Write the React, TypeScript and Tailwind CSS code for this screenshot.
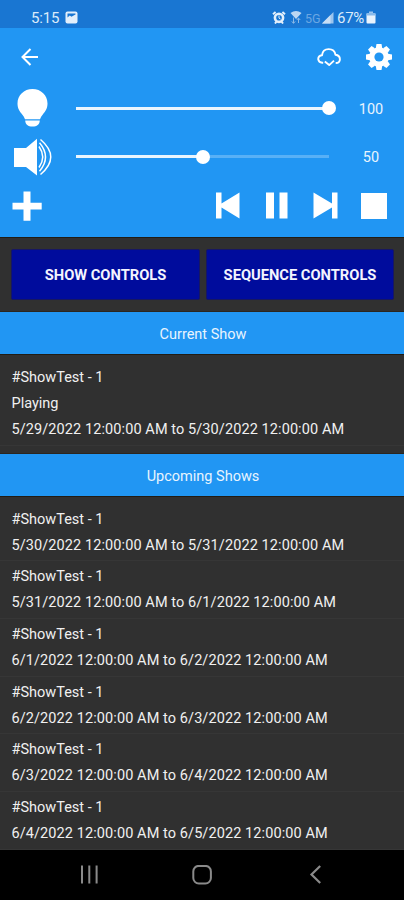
import React from "react";

const upcoming = [
  "5/30/2022 12:00:00 AM to 5/31/2022 12:00:00 AM",
  "5/31/2022 12:00:00 AM to 6/1/2022 12:00:00 AM",
  "6/1/2022 12:00:00 AM to 6/2/2022 12:00:00 AM",
  "6/2/2022 12:00:00 AM to 6/3/2022 12:00:00 AM",
  "6/3/2022 12:00:00 AM to 6/4/2022 12:00:00 AM",
  "6/4/2022 12:00:00 AM to 6/5/2022 12:00:00 AM",
];

const gearAngles = [0, 45, 90, 135, 180, 225, 270, 315];

function StatusBar() {
  return (
    <div className="flex h-7 shrink-0 items-start bg-[#1976d2] pt-[9px] pl-[31px] text-[#dcebfa]">
      <span className="w-[34px] text-[15px] leading-[19px] tracking-[-0.2px]">5:15</span>
      <svg className="mt-[2px]" width="13" height="13" viewBox="0 0 13 13">
        <rect x="0.5" y="0.5" width="12" height="12" rx="2" fill="#e3effb" />
        <path d="M2.500 6.500 4.800 4.500 6.400 5.800 10.500 3.500V2.500h-8Z" fill="#1976d2" />
      </svg>
      <svg className="mt-[2px] ml-[194px]" width="14" height="13" viewBox="0 0 14 13">
        <path d="M1 3.2 3.6 1M13 3.2 10.4 1M3 12.5l1.5-2M11 12.5l-1.5-2" stroke="#e3effb" strokeWidth="2" />
        <circle cx="7" cy="6.8" r="4.1" fill="none" stroke="#e3effb" strokeWidth="2.600" />
        <path d="M7 4.5v2.6l1.6 1" stroke="#e3effb" strokeWidth="1" fill="none" />
      </svg>
      <svg className="mt-[1px] ml-[4px]" width="12" height="14" viewBox="0 0 12 14">
        <path d="M0.5 3Q6-1 11.500 3L6 9Z" fill="#bdd7f2" />
        <path d="M3.500 7.500v5.500M1.8 11.400l1.700 2 1.700-2M8.500 13V7.800M6.800 10l1.700-2 1.700 2" stroke="#8ab8e6" fill="none" />
      </svg>
      <span className="ml-[3px] w-[17px] text-[12.500px] leading-[19px] text-[#6ba7e3]">5G</span>
      <svg className="mt-[3px]" width="12" height="12" viewBox="0 0 12 12">
        <path d="M0 11.5 11.5 0v11.5Z" fill="#9cc5ee" />
        <path d="M0 11.5 8.5 3v8.5Z" fill="#c7def5" />
      </svg>
      <span className="ml-[3px] w-[29px] text-[15px] leading-[19px] tracking-[-0.3px]">67%</span>
      <svg className="mt-[2px]" width="10" height="13" viewBox="0 0 10 13">
        <path d="M3 0.5h4v2H3Z" fill="#9cc5ee" />
        <rect x="0.5" y="2" width="9" height="10.5" rx="1" fill="#e9f3fd" />
        <path d="M1 2h8v2.500H1Z" fill="#89baeb" />
      </svg>
    </div>
  );
}

function Slider({ value }: { value: number }) {
  return (
    <div className="flex w-[253px] items-center">
      <div className="h-[3px] bg-[#eaf5fe]" style={{ width: `${value}%` }} />
      <div className="z-10 -mx-[7px] size-[14px] shrink-0 rounded-full bg-white" />
      <div className="h-[3px] flex-1 bg-[#58b0f6]" />
    </div>
  );
}

function Header() {
  return (
    <div className="flex h-[209px] shrink-0 flex-col bg-[#2196f3] text-white">
      <div className="flex h-[56px] items-center pt-[2px] pl-[20px]">
        <svg width="19" height="18" viewBox="0 0 19 18" fill="none" stroke="#fff" strokeWidth="2">
          <path d="M18 9H3M10.500 1 2.500 9l8 8" />
        </svg>
        <svg className="ml-[277px]" width="26" height="20" viewBox="0 0 26 20" fill="none" stroke="#fff" strokeWidth="1.900" strokeLinejoin="round">
          <path d="M7.200 15.800H6.200A4.200 4.200 0 0 1 2.200 12.200C2.200 9.900 3.800 8.600 6 8.300 6.400 4.500 9 2.100 12.700 2.100c3.600 0 6.200 2.200 6.800 5.700 2.700.4 4.400 2.100 4.400 4.400 0 2.300-1.700 3.800-4.200 3.800" />
          <path d="m8.800 14.600 4.400 3.500 4.800-4.500" />
        </svg>
        <svg className="ml-[24px]" width="26" height="26" viewBox="-13 -13 26 26">
          <g fill="#fff">
            <circle r="9.800" />
            {gearAngles.map((angle) => (
              <path key={angle} transform={`rotate(${angle})`} d="M-3.200-9-2.500-13H2.500L3.200-9Z" />
            ))}
          </g>
          <circle r="4.600" fill="#2196f3" />
        </svg>
      </div>
      <div className="flex h-[48px] items-center pl-[17px]">
        <svg width="31" height="38" viewBox="0 0 31 38" fill="#fff">
          <path d="M15.5 0C7 0 .5 6.3.5 14.6c0 5 2.2 8 4.7 11 1.3 1.6 2.200 3.100 2.800 4.600h15c.6-1.500 1.500-3 2.800-4.600 2.500-3 4.700-6 4.700-11C30.500 6.300 24 0 15.500 0Z" />
          <path d="M8.200 31.400h14.600c-.3 4-2.800 6.200-7.300 6.200s-7-2.200-7.300-6.200Z" />
        </svg>
        <div className="ml-[28px]"><Slider value={100} /></div>
        <span className="ml-[17px] w-[50px] pt-[3px] text-center text-[14.500px] text-[#e8f4fe]">100</span>
      </div>
      <div className="flex h-[49px] items-center pl-[14px]">
        <svg width="38" height="38" viewBox="0 0 38 38" fill="#fff">
          <path d="M0 10h12L23 .8v36.700L12 29H0Z" />
          <g fill="none" stroke="#fff" strokeWidth="1.500">
            <path d="M25 8.500q7.500 10.500 0 21" />
            <path d="M25.500 4.700q12 14.300 0 28.600" />
            <path d="M26.500 1.500q20.500 17.500 0 35" />
          </g>
        </svg>
        <div className="ml-[24px]"><Slider value={50} /></div>
        <span className="ml-[17px] w-[50px] pt-[3px] text-center text-[14.500px] text-[#e8f4fe]">50</span>
      </div>
      <div className="flex h-[49px] items-center pl-[12px]">
        <svg width="30" height="30" viewBox="0 0 30 30">
          <path d="M11.500.500h7v11.200h11.200v6.800H18.500v11.200h-7V18.500H.500v-6.800h11Z" fill="#fff" />
        </svg>
        <svg className="ml-[174px]" width="24" height="27" viewBox="0 0 24 27" fill="#fff">
          <path d="M0 .5h5.500v11L23.500.5v26L5.500 15.500v11H0Z" />
        </svg>
        <svg className="ml-[26px]" width="22" height="27" viewBox="0 0 22 27" fill="#fff">
          <path d="M0 .5h8v26H0ZM13.500.5h8v26h-8Z" />
        </svg>
        <svg className="ml-[25px]" width="25" height="27" viewBox="0 0 25 27" fill="#fff">
          <path d="M24.500.5H19v11L.5.5v26L19 15.500v11h5.500Z" />
        </svg>
        <div className="ml-[23px] size-[26px] bg-white" />
      </div>
    </div>
  );
}

function SectionBand({ title }: { title: string }) {
  return (
    <div className="flex h-[43px] shrink-0 items-center justify-center border-t border-[#2a2620] bg-[#2196f3] pt-[4px] pl-[2px] text-[14.500px] text-[#e8f4fe]">
      {title}
    </div>
  );
}

function Row({ lines }: { lines: string[] }) {
  return (
    <div className="border-b border-[#363636] pt-[3px] pb-[1.700px] pl-[11.500px] text-[14.500px] leading-[26px] text-[#f0f0f0]">
      {lines.map((line) => (
        <div key={line} className={line.includes("/") ? "tracking-[0.090px]" : ""}>{line}</div>
      ))}
    </div>
  );
}

export default function App() {
  return (
    <div className="flex h-[900px] w-[404px] flex-col overflow-hidden bg-[#303030] font-[Roboto,sans-serif]">
      <StatusBar />
      <Header />
      <div className="flex h-[74px] shrink-0 gap-[6px] border-t border-[#211c14] pt-[11px] pr-[10px] pl-[11px]">
        <button className="h-[51px] w-[189px] rounded-[2px] border border-[#171762] bg-[#000c9c] pt-[2px] text-[14.700px] font-bold text-[#f4f4ff]">SHOW CONTROLS</button>
        <button className="h-[51px] w-[188px] rounded-[2px] border border-[#171762] bg-[#000c9c] pt-[2px] text-[14.700px] font-bold text-[#f4f4ff]">SEQUENCE CONTROLS</button>
      </div>
      <SectionBand title="Current Show" />
      <div className="h-[99px] shrink-0 border-t border-[#211c14] pt-[7px]">
        <Row lines={["#ShowTest - 1", "Playing", "5/29/2022 12:00:00 AM to 5/30/2022 12:00:00 AM"]} />
      </div>
      <SectionBand title="Upcoming Shows" />
      <div className="h-[354px] shrink-0 overflow-hidden border-t border-[#211c14] pt-[6.700px]">
        {upcoming.map((range) => (
          <Row key={range} lines={["#ShowTest - 1", range]} />
        ))}
      </div>
      <div className="flex flex-1 items-start bg-black pt-[15px] pl-[80px]">
        <svg width="19" height="20" viewBox="0 0 19 20" fill="none" stroke="#8a8a8a" strokeWidth="2">
          <path d="M2 0.500v18M9.300.500v18M16.600.500v18" />
        </svg>
        <svg className="ml-[93px]" width="20" height="20" viewBox="0 0 20 20" fill="none" stroke="#8a8a8a" strokeWidth="2">
          <rect x="1.300" y="0.900" width="17.600" height="17.600" rx="5.500" />
        </svg>
        <svg className="ml-[97px]" width="13" height="20" viewBox="0 0 13 20" fill="none" stroke="#8a8a8a" strokeWidth="2.200">
          <path d="M11.200 1 2.500 9.500l8.700 8.500" />
        </svg>
      </div>
    </div>
  );
}
